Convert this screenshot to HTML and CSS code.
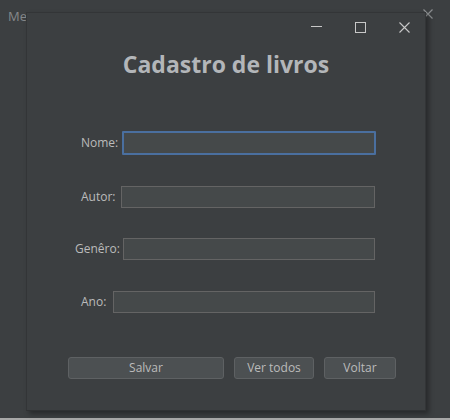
FILE: index.html
```html
<!DOCTYPE html>
<html lang="pt">
<head>
<meta charset="utf-8">
<title>Cadastro de livros</title>
<link rel="stylesheet" href="styles.css">
</head>
<body>
<div class="desktop">
  <div class="bg-title">Menu</div>
  <svg class="bg-close" width="10" height="10" viewBox="0 0 10 10"><path d="M0.5 0.5 L9.5 9.5 M9.5 0.5 L0.5 9.5" stroke="#8b8e90" stroke-width="1.2" fill="none"/></svg>
  <div class="dialog">
    <div class="titlebar">
      <div class="tb-btn"><svg width="11" height="11" viewBox="0 0 11 11"><path d="M0 4.5 H11" stroke="#c8c8c8" stroke-width="1" fill="none"/></svg></div>
      <div class="tb-btn"><svg width="11" height="11" viewBox="0 0 11 11"><rect x="0.5" y="0.5" width="10" height="10" stroke="#c8c8c8" stroke-width="1" fill="none"/></svg></div>
      <div class="tb-btn"><svg width="11" height="11" viewBox="0 0 11 11"><path d="M0.5 0.5 L10.5 10.5 M10.5 0.5 L0.5 10.5" stroke="#c8c8c8" stroke-width="1.1" fill="none"/></svg></div>
    </div>
    <h1 class="title">Cadastro de livros</h1>
    <div class="form">
      <div class="row row-nome">
        <label class="label">Nome:</label>
        <div class="field field-focus field-nome"></div>
      </div>
      <div class="row row-autor">
        <label class="label">Autor:</label>
        <div class="field field-autor"></div>
      </div>
      <div class="row row-genero">
        <label class="label">Genêro:</label>
        <div class="field field-genero"></div>
      </div>
      <div class="row">
        <label class="label">Ano:</label>
        <div class="field field-ano"></div>
      </div>
    </div>
    <div class="buttons">
      <div class="btn btn-salvar">Salvar</div>
      <div class="btn btn-ver">Ver todos</div>
      <div class="btn btn-voltar">Voltar</div>
    </div>
  </div>
</div>
<div class="strip"></div>
</body>
</html>
```
FILE: styles.css
```css
html, body {
  margin: 0;
  padding: 0;
}
body {
  width: 450px;
  height: 420px;
  background: #3c3f41;
  font-family: "Open Sans", "Noto Sans", sans-serif;
  color: #bbbbbb;
  overflow: hidden;
}
.desktop {
  position: relative;
  height: 418px;
}
.strip {
  height: 2px;
  background: #a8a8a8;
}
.bg-title {
  position: absolute;
  left: 8px;
  top: 7px;
  font-size: 13px;
  line-height: 18px;
  color: #85888a;
}
.bg-close {
  position: absolute;
  left: 423px;
  top: 9px;
}
.dialog {
  position: absolute;
  left: 26px;
  top: 12px;
  width: 400px;
  height: 399px;
  box-sizing: border-box;
  background: #3c3f41;
  border: 1px solid #333537;
  border-bottom-color: #2f3133;
  box-shadow: 3px 3px 5px rgba(0, 0, 0, 0.35);
  display: flex;
  flex-direction: column;
}
.titlebar {
  height: 30px;
  margin-top: -1px;
  margin-right: -1px;
  display: flex;
  justify-content: flex-end;
}
.tb-btn {
  width: 44px;
  height: 30px;
  display: flex;
  align-items: center;
  justify-content: center;
}
.title {
  margin: 6px 0 0;
  font-size: 23px;
  line-height: 32px;
  font-weight: 700;
  text-align: center;
  color: #b3b6b9;
}
.form {
  margin-top: 51px;
  display: flex;
  flex-direction: column;
  gap: 29px;
}
.row {
  height: 24px;
  display: flex;
  align-items: center;
  padding: 0 50px 0 54px;
}
.row-nome {
  padding-right: 49px;
}
.row-autor {
  margin-top: 1px;
}
.row-genero {
  margin-top: -1px;
  padding-left: 48px;
}
.label {
  font-size: 12px;
  line-height: 16px;
  color: #bbbbbb;
}
.field {
  margin-left: auto;
  height: 22px;
  box-sizing: border-box;
  background: #45494a;
  border: 1px solid #646464;
}
.field-focus {
  height: 24px;
  border: 2px solid #4a6f9f;
  border-radius: 1px;
}
.field-nome { width: 254px; }
.field-autor { width: 254px; }
.field-genero { width: 252px; }
.field-ano { width: 262px; }
.buttons {
  margin-top: 43px;
  margin-left: -1px;
  padding-left: 42px;
  display: flex;
  gap: 10px;
}
.btn {
  height: 22px;
  box-sizing: border-box;
  background: #4c5052;
  border: 1px solid #5e6163;
  border-radius: 3px;
  font-size: 12px;
  line-height: 20px;
  text-align: center;
  color: #bbbbbb;
}
.btn-salvar { width: 156px; }
.btn-ver { width: 80px; }
.btn-voltar { width: 72px; }
```
